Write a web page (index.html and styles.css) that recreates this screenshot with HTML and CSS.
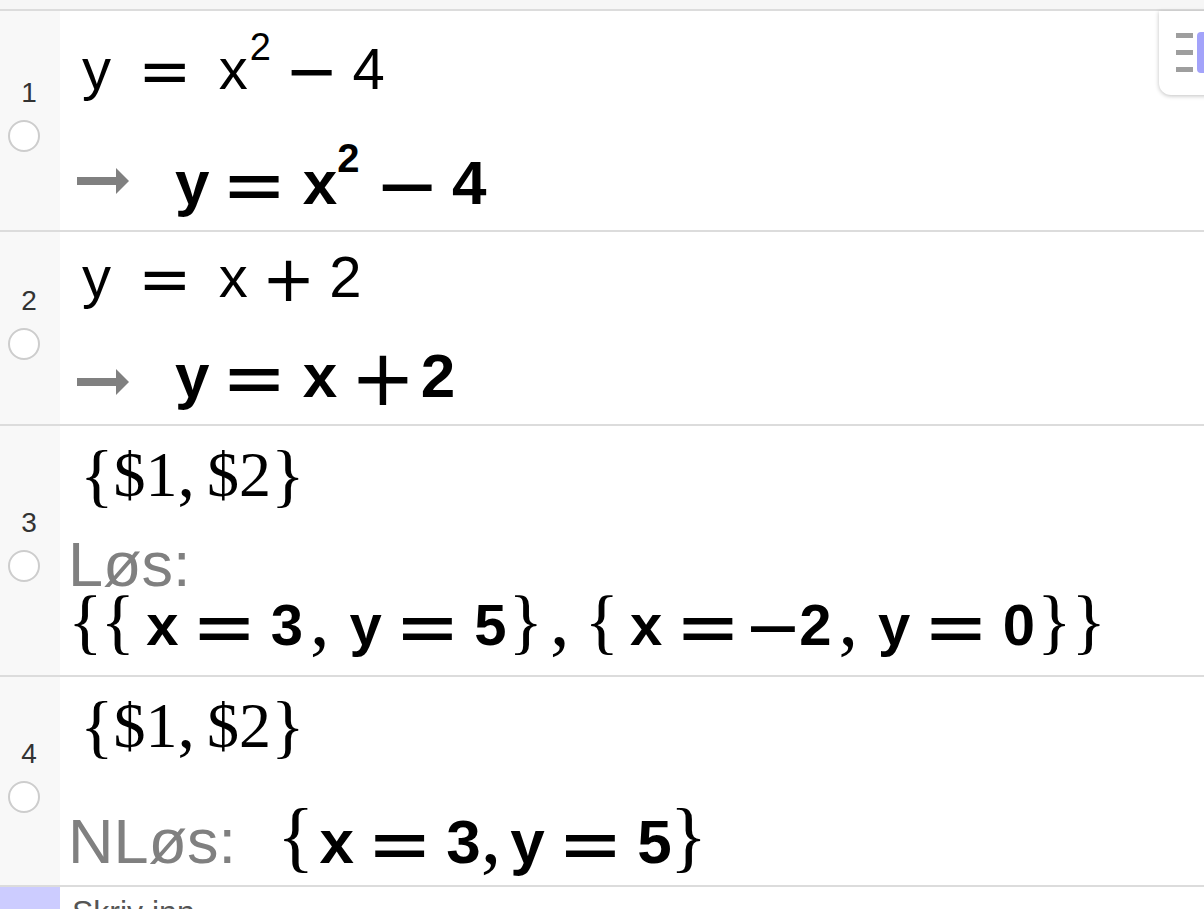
FILE: index.html
```html
<!DOCTYPE html>
<html lang="no">
<head>
<meta charset="utf-8">
<title>CAS</title>
<link rel="stylesheet" href="styles.css">
</head>
<body>
<div class="cas">
  <div class="topstrip"></div>

  <div class="row r1">
    <div class="gutter"><span class="num">1</span><span class="radio"></span></div>
    <div class="content">
      <div class="line in l1a"><span>y</span><span class="op rel">=</span><span>x</span><span class="sup">2</span><span class="op bin">−</span><span>4</span></div>
      <div class="line out l1b"><svg class="arrow a1" width="52" height="26" viewBox="0 0 52 26"><rect x="0" y="9" width="41" height="8" fill="#808080"/><polygon points="39,0 52,13 39,26" fill="#808080"/></svg><span class="first">y</span><span class="op rel">=</span><span>x</span><span class="sup">2</span><span class="op bin bs">−</span><span>4</span></div>
    </div>
  </div>

  <div class="row r2">
    <div class="gutter"><span class="num">2</span><span class="radio"></span></div>
    <div class="content">
      <div class="line in l2a"><span>y</span><span class="op rel">=</span><span>x</span><span class="op bin">+</span><span>2</span></div>
      <div class="line out l2b"><svg class="arrow a2" width="52" height="26" viewBox="0 0 52 26"><rect x="0" y="9" width="41" height="8" fill="#808080"/><polygon points="39,0 52,13 39,26" fill="#808080"/></svg><span class="first">y</span><span class="op rel">=</span><span>x</span><span class="op bin bx">+</span><span>2</span></div>
    </div>
  </div>

  <div class="row r3">
    <div class="gutter"><span class="num">3</span><span class="radio"></span></div>
    <div class="content">
      <div class="line ser l3a"><span class="sbr">{</span><span>$1</span><span class="scm">,</span><span>$2</span><span class="sbr">}</span></div>
      <div class="line lbl l3b">Løs:</div>
      <div class="line out3 l3c"><span class="br">{</span><span class="br bl2">{</span><span class="ax">x</span><span class="op rel">=</span><span>3</span><span class="cm">,</span><span>y</span><span class="op rel">=</span><span>5</span><span class="br rb">}</span><span class="cm">,</span><span class="br bl3">{</span><span class="ax">x</span><span class="op rel">=</span><span class="op un">−</span><span>2</span><span class="cm">,</span><span>y</span><span class="op rel">=</span><span>0</span><span class="br rb">}</span><span class="br rb2">}</span></div>
    </div>
  </div>

  <div class="row r4">
    <div class="gutter"><span class="num">4</span><span class="radio"></span></div>
    <div class="content">
      <div class="line ser l4a"><span class="sbr">{</span><span>$1</span><span class="scm">,</span><span>$2</span><span class="sbr">}</span></div>
      <div class="line l4b"><span class="lbl">NLøs:</span><span class="out4"><span class="br">{</span><span class="ax">x</span><span class="op rel">=</span><span>3</span><span class="cm">,</span><span>y</span><span class="op rel">=</span><span>5</span><span class="br rb">}</span></span></div>
    </div>
  </div>

  <div class="inputrow">
    <div class="igutter"></div>
    <div class="itext">Skriv inn</div>
  </div>
</div>

<div class="stylebar">
  <div class="bars"><span></span><span></span><span></span></div>
  <div class="panel"></div>
</div>
</body>
</html>
```

FILE: styles.css
```css
* { box-sizing: border-box; }
html, body { margin: 0; padding: 0; background: #fff; }
body {
  width: 1204px;
  height: 909px;
  overflow: hidden;
  position: relative;
  font-family: "Liberation Sans", Arial, sans-serif;
  color: #000;
}

.topstrip { height: 11px; background: #f6f6f6; border-bottom: 2px solid #dcdcdc; }

.row { display: flex; border-bottom: 2px solid #dcdcdc; }
.r1 { height: 221px; }
.r2 { height: 194px; }
.r3 { height: 251px; }
.r4 { height: 210px; }

.gutter {
  width: 60px;
  flex: none;
  background: #f8f8f8;
  display: flex;
  flex-direction: column;
  justify-content: center;
  align-items: flex-start;
  gap: 13px;
  padding: 0 0 10px 8px;
}
.num { width: 42px; text-align: center; font-size: 28px; line-height: 28px; color: #333; }
.radio { width: 32px; height: 32px; border: 2px solid #cdcdcd; border-radius: 50%; background: #fff; }

.content { flex: 1; padding-left: 8px; min-width: 0; }
.line { white-space: nowrap; }

.op { font-family: "DejaVu Sans", sans-serif; font-weight: normal; line-height: 0; }

/* input (regular) */
.in { font-size: 58px; line-height: 58px; margin-left: 14px; }
.in .op { font-size: 64px; vertical-align: -4px; }
.in .rel { margin: 0 27px; }
.in .bin { margin: 0 14px; }
.in .sup { font-size: 38px; line-height: 0; vertical-align: 29px; margin-left: 2px; }

/* output (bold) */
.out { font-weight: bold; font-size: 62px; line-height: 62px; margin-left: 9px; }
.out .op { font-size: 78px; vertical-align: -8px; }
.out .rel { margin: 0 16px 0 12px; }
.out .bin { margin: 0 12px 0 15px; }
.out .bx { margin-left: 13px; margin-right: 5px; }
.out .sup { font-size: 40px; line-height: 0; vertical-align: 32px; margin-left: 0; }
.out .first { margin-left: 46px; }
.arrow { display: inline-block; }
.a1 { vertical-align: 10px; }
.a2 { vertical-align: 2px; }

/* serif input {$1, $2} */
.ser { font-family: "Liberation Serif", "Times New Roman", serif; font-size: 64px; line-height: 62px; margin-left: 12px; }
.sbr { font-size: 70px; line-height: 0; vertical-align: -3px; }
.scm { font-size: 70px; line-height: 0; margin-right: 12px; }

/* grey label */
.lbl { font-size: 63px; line-height: 62px; color: #808080; }

/* braces and commas in results */
.br { font-family: "Liberation Serif", "Times New Roman", serif; font-weight: normal; line-height: 0; }
.cm { font-family: "Liberation Serif", "Times New Roman", serif; font-weight: normal; line-height: 0; }

/* row 3 result */
.out3 { font-weight: bold; font-size: 58px; line-height: 52px; }
.out3 .br { font-size: 72px; }
.out3 .op { font-size: 78px; vertical-align: -9px; }
.out3 .rel { margin: 0 14px 0 13px; }
.out3 .un { font-size: 70px; vertical-align: -6px; margin: 0 -3px 0 -11px; }
.out3 .cm { font-size: 78px; margin: 0 20px 0 7px; }
.out3 .bl2 { margin-left: -2px; }
.out3 .bl3 { margin-left: -5px; }
.out3 .ax { margin-left: 11px; }
.out3 .rb { margin-left: 2px; }
.out3 .rb2 { margin-left: 0; }

/* row 4 result */
.out4 { font-weight: bold; font-size: 62px; margin-left: 41px; }
.out4 .br { font-size: 78px; }
.out4 .op { font-size: 78px; vertical-align: -8px; }
.out4 .rel { margin: 0 14px 0 13px; }
.out4 .ax { margin-left: 5px; }
.out4 .cm { font-size: 82px; margin: 0 9px 0 0; }
.out4 .rb { margin-left: -2px; }

/* vertical placement */
.l1a { margin-top: 29px; }
.l1b { margin-top: 54px; }
.l2a { margin-top: 16px; }
.l2b { margin-top: 39px; }
.l3a { margin-top: 18px; }
.l3b { margin-top: 27px; }
.l3c { margin-top: 4px; }
.l4a { margin-top: 18px; }
.l4b { margin-top: 53px; line-height: 62px; }

/* bottom input row */
.inputrow { display: flex; height: 40px; }
.igutter { width: 60px; flex: none; background: #ccccff; }
.itext { padding: 9px 0 0 12px; font-size: 32px; line-height: 32px; color: #555; }

/* style bar toggle */
.stylebar {
  position: absolute;
  top: 11px;
  left: 1159px;
  width: 60px;
  height: 84px;
  background: #fff;
  border-radius: 0 0 0 12px;
  box-shadow: 0 1px 4px rgba(0, 0, 0, 0.25);
  display: flex;
  align-items: flex-start;
  gap: 4px;
  padding: 21px 0 0 17px;
}
.bars { display: flex; flex-direction: column; gap: 12px; padding-top: 1px; }
.bars span { display: block; width: 17px; height: 5px; background: #9e9e9e; }
.panel { width: 20px; height: 41px; background: #a3a3fa; border-radius: 4px; }
```
